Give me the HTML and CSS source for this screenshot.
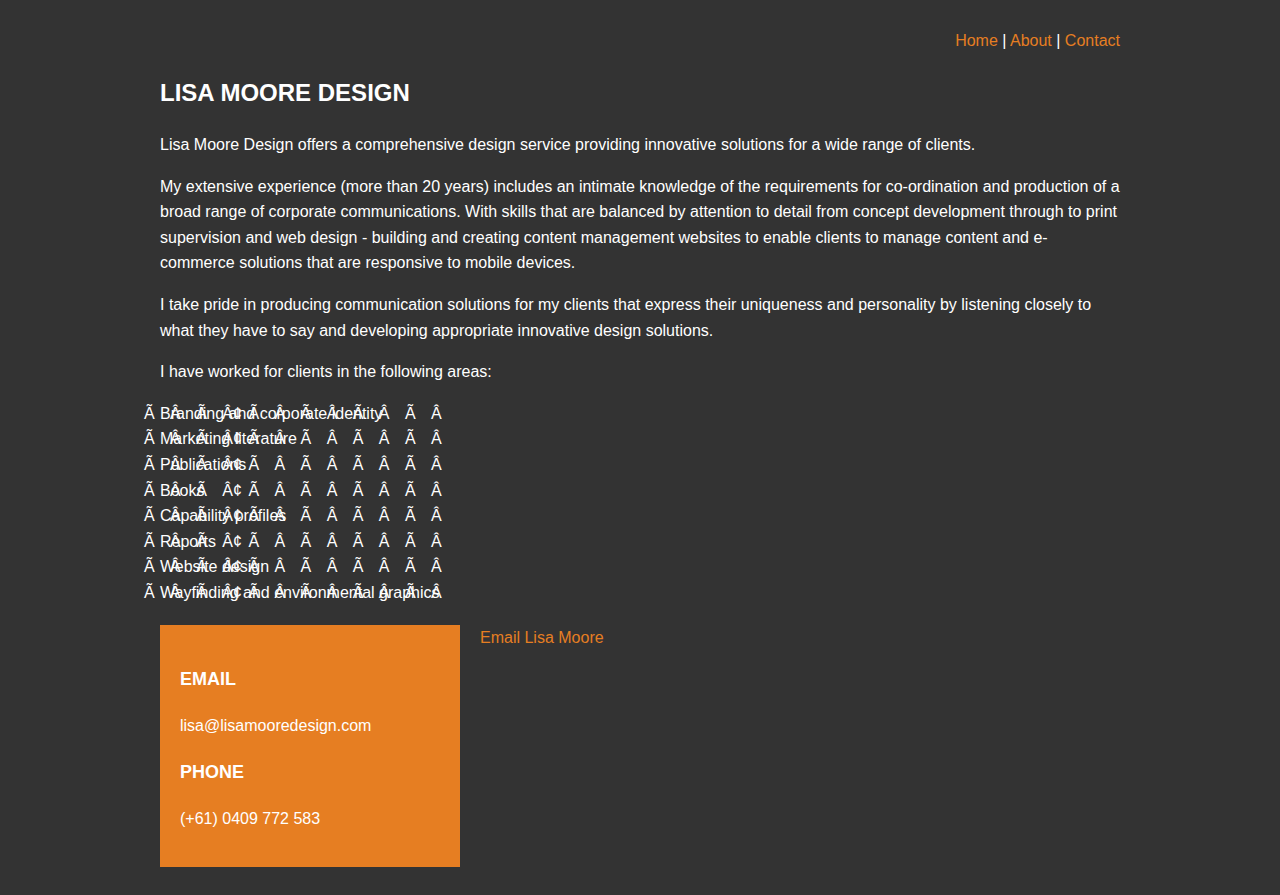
FILE: index.html
```html
<!DOCTYPE html>
<html lang="en">
<head>
<meta charset="utf-8">
<title>Lisa Moore Design</title>
<link rel="stylesheet" href="styles.css">
</head>
<body>
<div class="page">
  <nav class="nav"><a href="#">Home</a> | <a href="#">About</a> | <a href="#">Contact</a></nav>
  <h1 class="title">LISA MOORE DESIGN</h1>
  <p>Lisa Moore Design offers a comprehensive design service providing innovative solutions for a wide range of clients.</p>
  <p>My extensive experience (more than 20 years) includes an intimate knowledge of the requirements for co-ordination and production of a broad range of corporate communications. With skills that are balanced by attention to detail from concept development through to print supervision and web design - building and creating content management websites to enable clients to manage content and e-commerce solutions that are responsive to mobile devices.</p>
  <p>I take pride in producing communication solutions for my clients that express their uniqueness and personality by listening closely to what they have to say and developing appropriate innovative design solutions.</p>
  <p>I have worked for clients in the following areas:</p>
  <div class="areas">
    <div class="area"><span class="junk"><i>Ã</i><i>Â</i><i>Ã</i><i>Â¢</i><i>Ã</i><i>Â</i><i>Ã</i><i>Â</i><i>Ã</i><i>Â</i><i>Ã</i><i>Â</i></span><span class="label">Branding and corporate identity</span></div>
    <div class="area"><span class="junk"><i>Ã</i><i>Â</i><i>Ã</i><i>Â¢</i><i>Ã</i><i>Â</i><i>Ã</i><i>Â</i><i>Ã</i><i>Â</i><i>Ã</i><i>Â</i></span><span class="label">Marketing literature</span></div>
    <div class="area"><span class="junk"><i>Ã</i><i>Â</i><i>Ã</i><i>Â¢</i><i>Ã</i><i>Â</i><i>Ã</i><i>Â</i><i>Ã</i><i>Â</i><i>Ã</i><i>Â</i></span><span class="label">Publications</span></div>
    <div class="area"><span class="junk"><i>Ã</i><i>Â</i><i>Ã</i><i>Â¢</i><i>Ã</i><i>Â</i><i>Ã</i><i>Â</i><i>Ã</i><i>Â</i><i>Ã</i><i>Â</i></span><span class="label">Books</span></div>
    <div class="area"><span class="junk"><i>Ã</i><i>Â</i><i>Ã</i><i>Â¢</i><i>Ã</i><i>Â</i><i>Ã</i><i>Â</i><i>Ã</i><i>Â</i><i>Ã</i><i>Â</i></span><span class="label">Capability profiles</span></div>
    <div class="area"><span class="junk"><i>Ã</i><i>Â</i><i>Ã</i><i>Â¢</i><i>Ã</i><i>Â</i><i>Ã</i><i>Â</i><i>Ã</i><i>Â</i><i>Ã</i><i>Â</i></span><span class="label">Reports</span></div>
    <div class="area"><span class="junk"><i>Ã</i><i>Â</i><i>Ã</i><i>Â¢</i><i>Ã</i><i>Â</i><i>Ã</i><i>Â</i><i>Ã</i><i>Â</i><i>Ã</i><i>Â</i></span><span class="label">Website design</span></div>
    <div class="area"><span class="junk"><i>Ã</i><i>Â</i><i>Ã</i><i>Â¢</i><i>Ã</i><i>Â</i><i>Ã</i><i>Â</i><i>Ã</i><i>Â</i><i>Ã</i><i>Â</i></span><span class="label">Wayfinding and environmental graphics</span></div>
  </div>
  <div class="contact-row">
    <div class="contact-box">
      <h3>EMAIL</h3>
      <p>lisa@lisamooredesign.com</p>
      <h3>PHONE</h3>
      <p>(+61) 0409 772 583</p>
    </div>
    <a class="email-link" href="#">Email Lisa Moore</a>
  </div>
</div>
</body>
</html>
```

FILE: styles.css
```css
html, body {
  margin: 0;
  padding: 0;
  background: #333333;
}
body {
  font-family: "Liberation Sans", Arial, sans-serif;
  font-size: 16px;
  line-height: 1.6;
  color: #ffffff;
}
a {
  color: #e67e22;
  text-decoration: none;
}
.page {
  width: 960px;
  margin: 0 auto;
  padding-top: 28px;
  padding-bottom: 28px;
}
.nav {
  text-align: right;
  height: 25.6px;
  margin-bottom: 20px;
}
.title {
  font-size: 24px;
  font-weight: bold;
  margin: 0 0 20px;
  line-height: 1.6;
}
p {
  margin: 0 0 16px;
}
.areas {
  margin-top: 16px;
  margin-bottom: 20px;
}
.area {
  display: grid;
  height: 25.6px;
}
.junk, .label {
  grid-area: 1 / 1;
  white-space: nowrap;
}
.junk {
  display: flex;
  margin-left: -16px;
}
.junk i {
  font-style: normal;
  width: 26.1px;
  flex: none;
}
.label {
  justify-self: start;
}
.contact-row {
  display: flex;
  align-items: flex-start;
  gap: 20px;
}
.contact-box {
  width: 300px;
  box-sizing: border-box;
  background: #e67e22;
  padding: 20px 20px 20px;
}
.contact-box h3 {
  font-size: 18px;
  font-weight: bold;
  margin: 20px 0 19px;
  line-height: 1.6;
}
.contact-box p + h3 {
  margin-top: 19px;
}
.contact-box p {
  margin: 0;
}
.contact-box p:last-child {
  margin-bottom: 16px;
}
```
